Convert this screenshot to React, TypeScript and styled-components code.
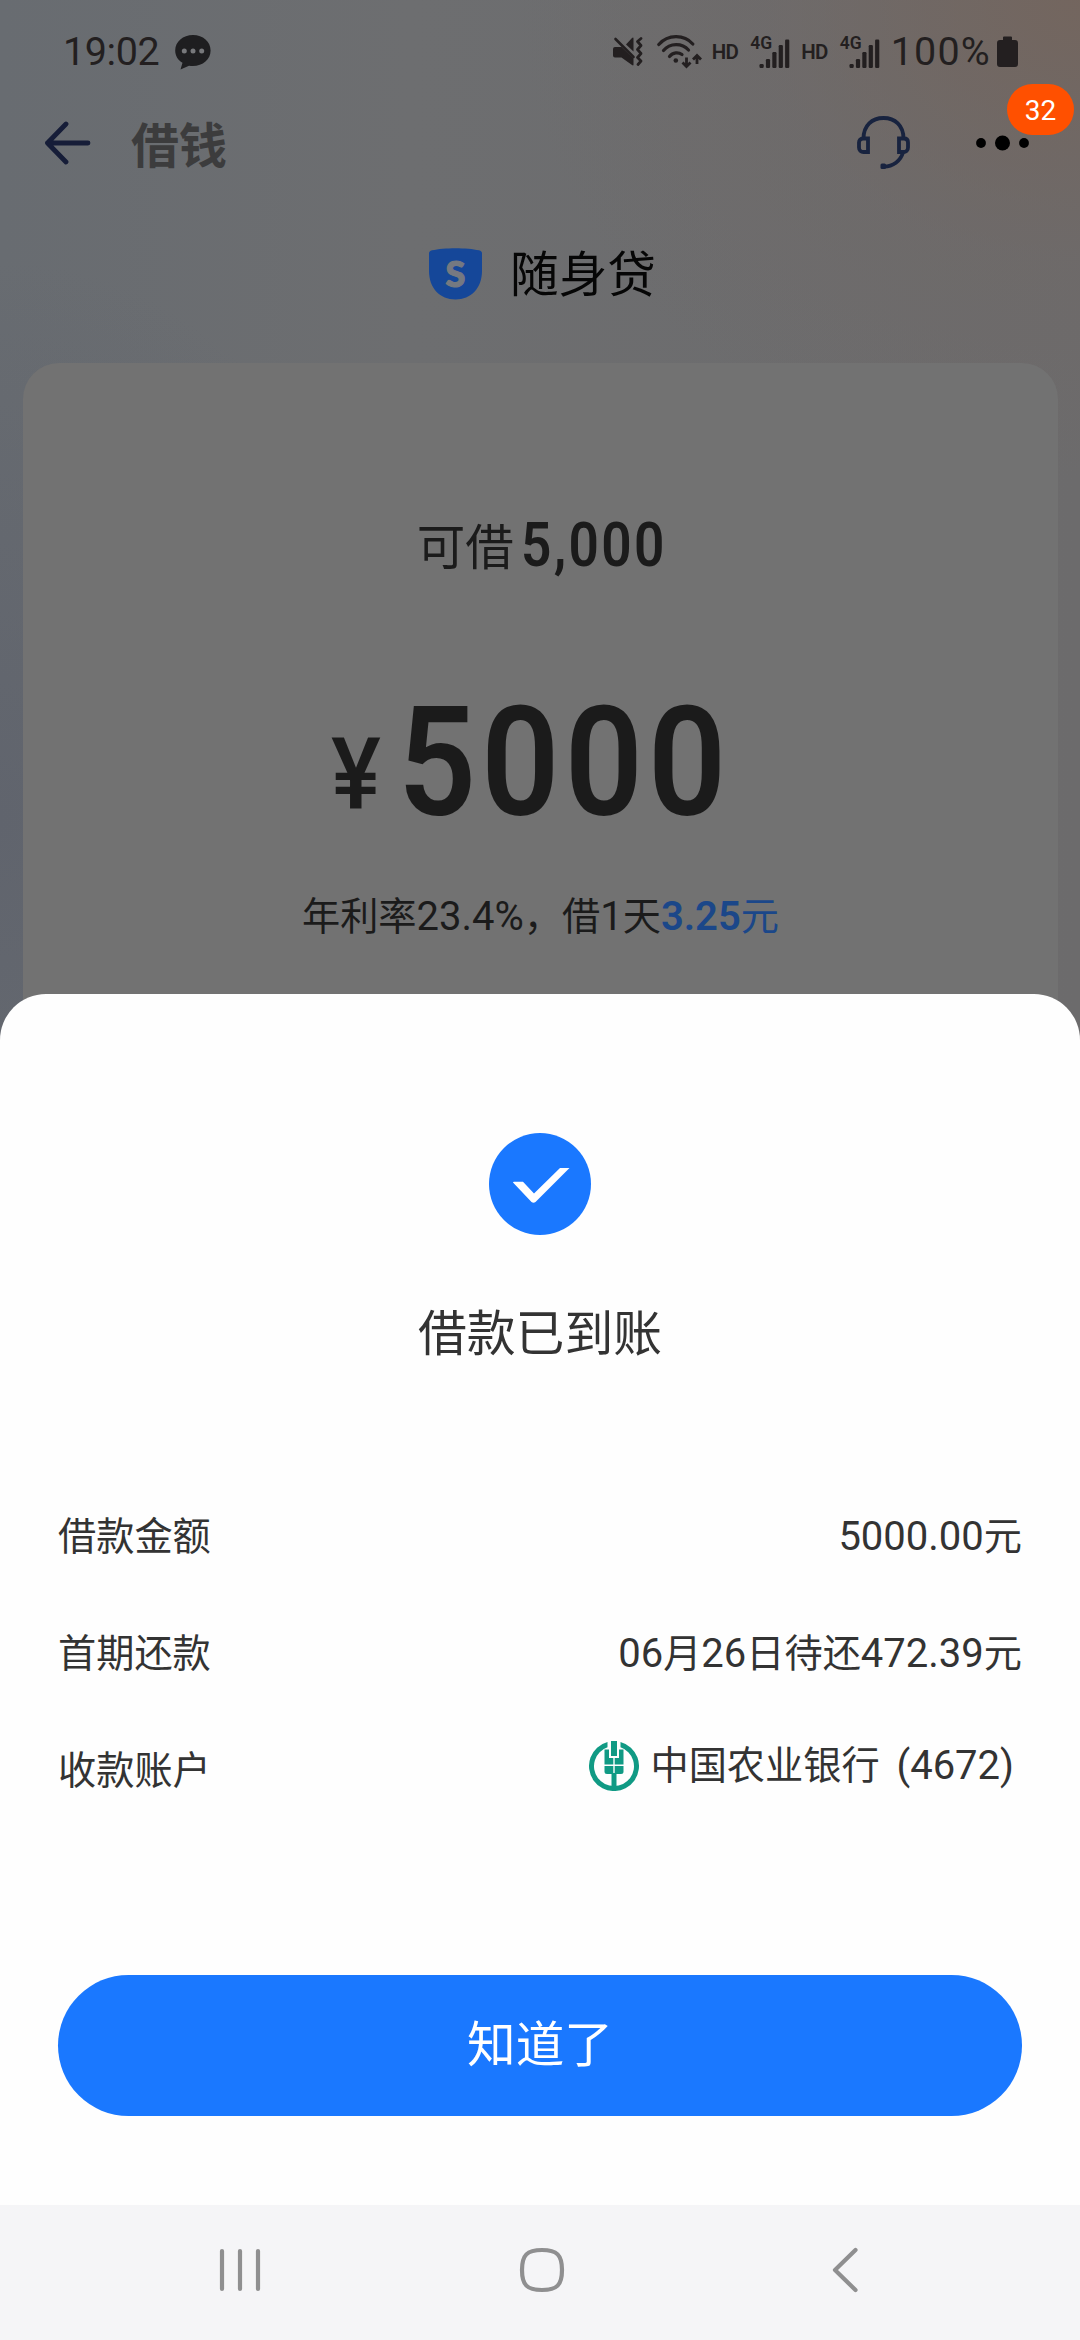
import React from "react";
import styled, { createGlobalStyle } from "styled-components";

const GlobalStyle = createGlobalStyle`
  * { box-sizing: border-box; }
  body { margin: 0; background: #f5f5f7; }
  svg { display: block; flex: none; }
`;

const Screen = styled.div`
  width: 1080px;
  height: 2340px;
  overflow: hidden;
  display: flex;
  flex-direction: column;
  font-family: Roboto, "Noto Sans CJK SC", sans-serif;
  color: #333;
`;

const Page = styled.main`
  height: 1060px;
  flex: none;
  display: flex;
  flex-direction: column;
  background:
    radial-gradient(ellipse 560px 480px at 1080px 0, rgba(116, 101, 93, 0.9), rgba(112, 104, 101, 0.4) 55%, rgba(110, 106, 105, 0) 100%),
    radial-gradient(ellipse 420px 560px at 0 820px, rgba(94, 98, 108, 0.8), rgba(98, 103, 112, 0) 100%),
    linear-gradient(90deg, #686c71 0, #6d6e70 38%, #6c6b6c 100%);
`;

const StatusBar = styled.div`
  height: 100px;
  padding: 4px 62px 0 63px;
  display: flex;
  align-items: center;
  color: #231f20;
`;

const StatusText = styled.span<{ $gap: number; $spacing: number }>`
  font-size: 39.5px;
  line-height: 48px;
  letter-spacing: ${(p) => p.$spacing}px;
  margin-right: ${(p) => p.$gap}px;
`;

const StatusIcons = styled.div`
  margin-left: auto;
  display: flex;
  align-items: center;
`;

const IconSlot = styled.span<{ $gap: number }>`
  margin-right: ${(p) => p.$gap}px;
`;

const HdTag = styled.span<{ $gap: number }>`
  font-size: 20.5px;
  font-weight: 600;
  line-height: 30px;
  letter-spacing: -0.7px;
  margin-right: ${(p) => p.$gap}px;
`;

const SignalBox = styled.div<{ $gap: number }>`
  position: relative;
  width: 40px;
  height: 34px;
  margin-right: ${(p) => p.$gap}px;
`;

const SignalLabel = styled.span`
  position: absolute;
  left: -1px;
  top: -1px;
  font-size: 17.5px;
  font-weight: 600;
  line-height: 18px;
`;

const Toolbar = styled.header`
  height: 86px;
  padding: 0 50px 0 44px;
  display: flex;
  align-items: center;
`;

const ToolbarTitle = styled.h1`
  flex: 1;
  margin: 0 0 0 39px;
  padding-top: 7px;
  font-size: 48px;
  font-weight: 700;
  line-height: 60px;
  color: #3c3c3d;
`;

const MoreButton = styled.div`
  position: relative;
  margin-left: 66px;
`;

const Badge = styled.span`
  position: absolute;
  left: 31px;
  top: -51px;
  width: 67px;
  height: 51px;
  border-radius: 26px;
  background: #ff5000;
  color: #fff;
  font-size: 28px;
  line-height: 53px;
  text-align: center;
`;

const Brand = styled.div`
  height: 177px;
  padding: 0 0 1px 5px;
  display: flex;
  align-items: center;
  justify-content: center;
  gap: 28px;
`;

const BrandName = styled.span`
  padding-top: 4px;
  color: #060606;
  font-size: 48.7px;
  line-height: 60px;
`;

const LoanCard = styled.section`
  flex: 1;
  margin: 0 22px 0 23px;
  padding-top: 146px;
  border-radius: 36px 36px 0 0;
  background: #727272;
  color: #1b1b1b;
  display: flex;
  flex-direction: column;
  align-items: center;
`;

const Available = styled.div`
  height: 72px;
  padding-left: 2px;
  display: flex;
  align-items: center;
  font-size: 48.5px;
`;

const AvailableLabel = styled.span`
  padding-bottom: 2px;
`;

const AvailableNumber = styled.strong`
  margin: 0 -20px 0 7px;
  padding-top: 2px;
  font-size: 60.5px;
  font-weight: 650;
  line-height: 72px;
  letter-spacing: 2.6px;
  transform: scaleX(0.88);
  transform-origin: left;
`;

const Amount = styled.div`
  height: 180px;
  margin-top: 92px;
  padding-right: 20px;
  display: flex;
  align-items: baseline;
  font-weight: 500;
  line-height: 180px;
`;

const Currency = styled.span`
  font-size: 101px;
  transform: translateY(-6px) scaleX(0.93);
`;

const AmountNumber = styled.span`
  margin: 0 -37px 0 15px;
  font-size: 152px;
  font-weight: 600;
  letter-spacing: 5.8px;
  transform: scaleX(0.9);
  transform-origin: left;
`;

const Rate = styled.div`
  margin-top: 36px;
  line-height: 56px;
`;

const Highlight = styled.span`
  color: #1b4789;
  font-weight: 600;
`;

const Cjk = styled.span`
  font-size: 38.2px;
  font-weight: 400;
`;

const Latin = styled.span`
  font-size: 40px;
  word-spacing: -1.5px;
`;

const Sheet = styled.section`
  position: relative;
  flex: 1;
  margin-top: -66px;
  padding: 139px 58px 0;
  border-radius: 46px 46px 0 0;
  background: #fefefe;
  display: flex;
  flex-direction: column;
  align-items: center;
`;

const SheetTitle = styled.h2`
  margin: 64px 0 0;
  font-size: 48.8px;
  font-weight: 400;
  line-height: 72px;
`;

const Details = styled.dl`
  align-self: stretch;
  margin: 107px 0 0;
  font-size: 40px;
  line-height: 56px;
`;

const DetailRow = styled.div`
  height: 117px;
  display: flex;
  align-items: center;
  justify-content: space-between;
`;

const Value = styled.dd`
  margin: 0;
`;

const BankValue = styled.dd`
  margin: 0;
  padding: 0 8px 10px 0;
  display: flex;
  align-items: center;
  gap: 11px;
  white-space: pre;
`;

const Confirm = styled.button`
  align-self: stretch;
  height: 141px;
  margin-top: 146px;
  padding: 0;
  border: 0;
  border-radius: 71px;
  background: #1a78ff;
  color: #fff;
  font-family: inherit;
  font-size: 48.6px;
  line-height: 72px;
`;

const NavBar = styled.nav`
  height: 135px;
  flex: none;
  padding: 0 213px 5px 217px;
  display: flex;
  align-items: center;
  justify-content: space-between;
  background: #f5f5f7;
`;

function Mixed({ children }: { children: string }) {
  const parts = children.match(/[\u3000-\uffef]+|[^\u3000-\uffef]+/g) ?? [];
  return (
    <>
      {parts.map((part, i) =>
        /[\u3000-\uffef]/.test(part) ? <Cjk key={i}>{part}</Cjk> : <Latin key={i}>{part}</Latin>
      )}
    </>
  );
}

function ChatIcon() {
  return (
    <svg width="36" height="35" viewBox="0 0 36 35">
      <path
        d="M18 0C8 0 .2 6.700 .2 15.500C.2 21 3 25 7.500 27.800L5.500 34.500L14 30.700C26 32.500 35.600 25.500 35.600 15.500C35.600 6.700 28 0 18 0Z"
        fill="#1e1e20"
      />
      <g fill="#77787b">
        <circle cx="9.300" cy="16" r="2.500" />
        <circle cx="18" cy="16" r="2.500" />
        <circle cx="26.700" cy="16" r="2.500" />
      </g>
    </svg>
  );
}

function MuteIcon() {
  return (
    <svg width="30" height="30" viewBox="0 0 30 30">
      <path d="M0 12Q0 10 2 10H8.500L20.500 21.500V27.500Q20.500 29 19 28L8.500 20.500H2Q0 20.500 0 18.500Z" fill="#231f20" />
      <path d="M20.500 1.500V14.500L13 7.500L19 1Q20.500 0 20.500 1.500Z" fill="#231f20" />
      <path d="M2.500 2L20.500 20" stroke="#231f20" strokeWidth="2.600" strokeLinecap="round" />
      <path
        d="M28 1.500L24.500 4.500L28 8.500L24.500 12.500L28 16.500L24.500 20.500L28 24L25 27.500"
        fill="none"
        stroke="#231f20"
        strokeWidth="2.700"
        strokeLinecap="round"
        strokeLinejoin="round"
      />
    </svg>
  );
}

function WifiIcon() {
  return (
    <svg width="45" height="34" viewBox="0 0 45 34">
      <g fill="none" stroke="#231f20" strokeWidth="3.200" strokeLinecap="round">
        <path d="M1.800 9.500C11 -.8 27 -.8 35.800 9" />
        <path d="M6.500 15.500C13 7.800 25 7.800 31.500 15" />
        <path d="M12.500 21.500C16 17 21.500 17 25 19.500" />
      </g>
      <circle cx="18.800" cy="25.500" r="2.300" fill="#231f20" />
      <path
        d="M29.500 22.500V31.500M25.500 27.500L29.500 31.500L33.500 27.500M40 29V20.500M36 24.500L40 20.500L44 24.500"
        fill="none"
        stroke="#231f20"
        strokeWidth="2.800"
      />
    </svg>
  );
}

function Signal({ gap }: { gap: number }) {
  const bars = [4, 9, 16, 23, 28.5];
  return (
    <SignalBox $gap={gap}>
      <SignalLabel>4G</SignalLabel>
      <svg width="40" height="34" viewBox="0 0 40 34">
        {bars.map((h, i) => (
          <rect key={h} x={8.5 + i * 6.4} y={33 - h} width="4.2" height={h} rx="1.200" fill="#231f20" />
        ))}
      </svg>
    </SignalBox>
  );
}

function BatteryIcon() {
  return (
    <svg width="21" height="32" viewBox="0 0 21 32">
      <path
        d="M6 1.500Q6 .5 7 .5H14Q15 .5 15 1.500V4H18Q21 4 21 7V28Q21 31 18 31H3Q0 31 0 28V7Q0 4 3 4H6Z"
        fill="#231f20"
      />
    </svg>
  );
}

function BackArrow() {
  return (
    <svg width="48" height="44" viewBox="0 0 48 44">
      <path
        d="M22 3L3.500 22L22 41M3.500 22H44"
        fill="none"
        stroke="#161d38"
        strokeWidth="4.800"
        strokeLinecap="round"
        strokeLinejoin="round"
      />
    </svg>
  );
}

function Headset() {
  return (
    <svg width="53" height="54" viewBox="0 0 53 54">
      <g fill="none" stroke="#18233f" strokeWidth="3.800">
        <path d="M6.500 22.500C6.500 9.500 15 2 26.500 2C38 2 46.500 9.500 46.500 22.500" />
        <path d="M11 22.500H6C3.500 22.500 2 24 2 26.500V31.500C2 34.500 4 36 6.500 36H11Z" />
        <path d="M42 22.500H47C49.500 22.500 51 24 51 26.500V31.500C51 34.500 49 36 46.500 36H42Z" />
        <path d="M46 36.500C43.500 45 36 50.500 27 50.500" />
      </g>
      <rect x="23.500" y="47.500" width="5.500" height="5.500" rx="1.500" fill="#18233f" />
    </svg>
  );
}

function BrandLogo() {
  return (
    <svg width="53" height="52" viewBox="0 0 53 52">
      <path
        d="M0 5.500Q0 3 3 2.300C15 -.6 38 -.6 50 2.300Q53 3 53 5.500V23C53 40 42 51.500 26.500 51.500C11 51.500 0 40 0 23Z"
        fill="#154799"
      />
      <text
        x="26.500"
        y="38.500"
        textAnchor="middle"
        fontFamily="Lato, sans-serif"
        fontWeight="900"
        fontSize="36"
        fill="#757981"
        stroke="#757981"
        strokeWidth="1.200"
      >
        S
      </text>
    </svg>
  );
}

function BankLogo() {
  return (
    <svg width="50" height="50" viewBox="0 0 50 50">
      <g fill="#109a84">
        <path d="M18.500 .9V6.200A20 20 0 1 0 31.500 6.200V.9A25 25 0 1 1 18.500 .9Z" />
        <path d="M22 0H28V15H22Z" />
        <path d="M15.500 8.500H20V17H24.300V23.500H15.500Z" />
        <path d="M34.500 8.500H30V17H25.700V23.500H34.500Z" />
        <path d="M15.500 25H24.300V33H18Q15.500 33 15.500 30.500Z" />
        <path d="M34.500 25H25.700V33H32Q34.500 33 34.500 30.500Z" />
        <path d="M22.500 32H27.500V47H22.500Z" />
      </g>
    </svg>
  );
}

export default function App() {
  return (
    <Screen>
      <GlobalStyle />
      <Page>
        <StatusBar>
          <StatusText $gap={16} $spacing={-0.4}>19:02</StatusText>
          <ChatIcon />
          <StatusIcons>
            <IconSlot $gap={14}>
              <MuteIcon />
            </IconSlot>
            <IconSlot $gap={10}>
              <WifiIcon />
            </IconSlot>
            <HdTag $gap={13}>HD</HdTag>
            <Signal gap={10} />
            <HdTag $gap={13}>HD</HdTag>
            <Signal gap={10} />
            <StatusText $gap={6} $spacing={1.2}>100%</StatusText>
            <BatteryIcon />
          </StatusIcons>
        </StatusBar>
        <Toolbar>
          <BackArrow />
          <ToolbarTitle>借钱</ToolbarTitle>
          <Headset />
          <MoreButton>
            <svg width="54" height="16" viewBox="0 0 54 16">
              <circle cx="5" cy="8" r="4.900" />
              <circle cx="26.500" cy="8" r="7.500" />
              <circle cx="48" cy="8" r="4.900" />
            </svg>
            <Badge>32</Badge>
          </MoreButton>
        </Toolbar>
        <Brand>
          <BrandLogo />
          <BrandName>随身贷</BrandName>
        </Brand>
        <LoanCard>
          <Available>
            <AvailableLabel>可借</AvailableLabel>
            <AvailableNumber>5,000</AvailableNumber>
          </Available>
          <Amount>
            <Currency>¥</Currency>
            <AmountNumber>5000</AmountNumber>
          </Amount>
          <Rate>
            <Mixed>年利率23.4%，借1天</Mixed>
            <Highlight>
              <Mixed>3.25元</Mixed>
            </Highlight>
          </Rate>
        </LoanCard>
      </Page>
      <Sheet>
        <svg width="102" height="102" viewBox="0 0 102 102">
          <circle cx="51" cy="51" r="51" fill="#1a78ff" />
          <path d="M24 49.500Q24 48.800 25 48.800H34L45 60.500L71 35H80.500L46.500 69Q44.500 70.500 42.500 69Z" fill="#fff" />
        </svg>
        <SheetTitle>借款已到账</SheetTitle>
        <Details>
          <DetailRow>
            <dt><Mixed>借款金额</Mixed></dt>
            <Value><Mixed>5000.00元</Mixed></Value>
          </DetailRow>
          <DetailRow>
            <dt><Mixed>首期还款</Mixed></dt>
            <Value><Mixed>06月26日待还472.39元</Mixed></Value>
          </DetailRow>
          <DetailRow>
            <dt><Mixed>收款账户</Mixed></dt>
            <BankValue>
              <BankLogo />
              <span><Mixed>{"中国农业银行  (4672)"}</Mixed></span>
            </BankValue>
          </DetailRow>
        </Details>
        <Confirm>知道了</Confirm>
      </Sheet>
      <NavBar>
        <svg width="46" height="46" viewBox="0 0 46 46">
          <path d="M5 4V42M23 4V42M41 4V42" stroke="#8f8f90" strokeWidth="4.200" strokeLinecap="round" />
        </svg>
        <svg width="46" height="46" viewBox="0 0 46 46">
          <path
            d="M23 3C38 3 43 8 43 23C43 38 38 43 23 43C8 43 3 38 3 23C3 8 8 3 23 3Z"
            fill="none"
            stroke="#8f8f90"
            strokeWidth="4.200"
          />
        </svg>
        <svg width="46" height="46" viewBox="0 0 46 46">
          <path
            d="M34.500 3L14 23L34.500 43"
            fill="none"
            stroke="#8f8f90"
            strokeWidth="4.200"
            strokeLinecap="round"
            strokeLinejoin="round"
          />
        </svg>
      </NavBar>
    </Screen>
  );
}
